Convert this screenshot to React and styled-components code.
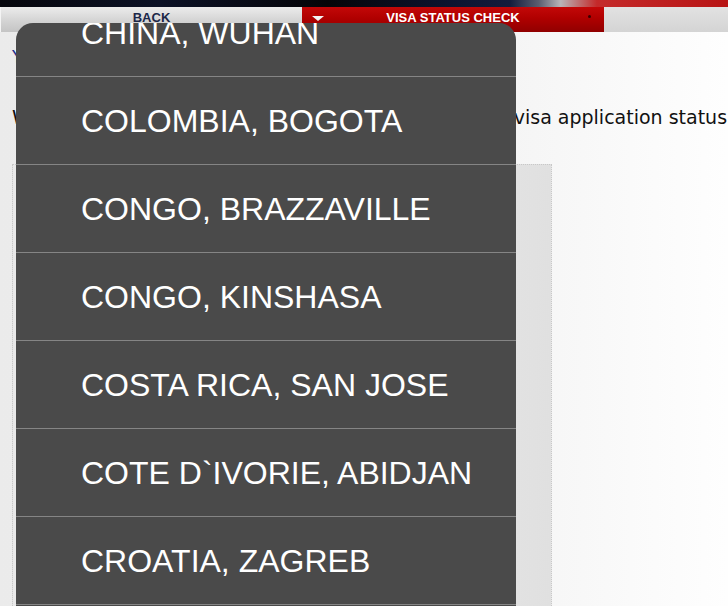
import React from "react";
import styled, { createGlobalStyle } from "styled-components";

const GlobalStyle = createGlobalStyle`
  html, body { margin: 0; padding: 0; }
  body { overflow: hidden; background: #f4f4f4; }
`;

const Page = styled.div`
  position: relative;
  width: 728px;
  height: 606px;
  overflow: hidden;
  background: linear-gradient(to right, #ebebeb 0%, #f2f2f2 60%, #fefefe 100%);
  font-family: "DejaVu Sans", Verdana, sans-serif;
`;

const Banner = styled.div`
  height: 7px;
  background: linear-gradient(
    to right,
    #07070d 0%,
    #0c1226 22%,
    #050508 45%,
    #0c1430 62%,
    #141c3c 70%,
    #5a5e70 74%,
    #b8b4b8 77%,
    #c42a2a 82%,
    #b81414 100%
  );
`;

const TabBar = styled.div`
  display: flex;
  height: 25px;
  font-family: "Liberation Sans", Arial, sans-serif;
  font-weight: bold;
  font-size: 13px;
  line-height: 15px;
`;

const Tab = styled.div`
  position: relative;
  width: ${(p) => p.$w}px;
  display: flex;
  justify-content: center;
  padding-top: 3px;
  box-sizing: border-box;
  color: ${(p) => (p.$red ? "#ffffff" : "#1b2748")};
  background: ${(p) =>
    p.$red
      ? "linear-gradient(to bottom, #c30808 0%, #b00000 45%, #900000 100%)"
      : "linear-gradient(to bottom, #ececec 0%, #d6d6d6 50%, #c4c4c4 100%)"};
  border-left: ${(p) => (p.$red ? "none" : "1px solid #f4f4f4")};
`;

const Filler = styled.div`
  flex: 1;
  background: linear-gradient(to bottom, #e2e2e2, #d4d4d4);
`;

const Caret = styled.span`
  position: absolute;
  left: 10px;
  top: 9px;
  width: 0;
  height: 0;
  border-left: 6px solid transparent;
  border-right: 6px solid transparent;
  border-top: 5px solid #f4f4f4;
`;

const Dot = styled.span`
  position: absolute;
  right: 13px;
  top: 8px;
  width: 3px;
  height: 3px;
  border-radius: 50%;
  background: #3a0000;
`;

const Content = styled.div`
  display: flex;
  flex-direction: column;
  padding: 15px 0 0 12px;
`;

const TopLink = styled.a`
  font-size: 17px;
  line-height: 20px;
  height: 20px;
  color: #1f2f8a;
  text-decoration: none;
`;

const Intro = styled.p`
  margin: 39px 0 0;
  font-size: 19px;
  line-height: 22px;
  color: #111;
  white-space: nowrap;
`;

const FormBox = styled.div`
  margin-top: 36px;
  width: 540px;
  height: 460px;
  box-sizing: border-box;
  border: 1px dotted #c8c8c8;
  background: linear-gradient(to right, #e9e9e9 0%, #e6e6e6 80%, #e0e0e0 100%);
`;

const Menu = styled.div`
  position: absolute;
  left: 16px;
  top: 23px;
  width: 500px;
  bottom: 0;
  background: #4a4a4a;
  border-radius: 17px 17px 0 0;
  overflow: hidden;
`;

const List = styled.ul`
  list-style: none;
  margin: -34px 0 0;
  padding: 0;
`;

const Item = styled.li`
  height: 88px;
  box-sizing: border-box;
  border-bottom: 1px solid #858585;
  display: flex;
  align-items: center;
  padding: 1px 0 0 65px;
  color: #ffffff;
  font-family: "Liberation Sans", Arial, sans-serif;
  font-size: 32px;
  white-space: nowrap;
`;

const cities = [
  "CHINA, WUHAN",
  "COLOMBIA, BOGOTA",
  "CONGO, BRAZZAVILLE",
  "CONGO, KINSHASA",
  "COSTA RICA, SAN JOSE",
  "COTE D`IVORIE, ABIDJAN",
  "CROATIA, ZAGREB",
  "CUBA, HAVANA",
];

export default function App() {
  return (
    <Page>
      <GlobalStyle />
      <Banner />
      <TabBar>
        <Tab $w={302}>BACK</Tab>
        <Tab $w={302} $red>
          <Caret />
          VISA STATUS CHECK
          <Dot />
        </Tab>
        <Filler />
      </TabBar>
      <Content>
        <TopLink href="#">Your visa status</TopLink>
        <Intro>Welcome to the site, where you can check your U.S. visa application status check.</Intro>
        <FormBox />
      </Content>
      <Menu>
        <List>
          {cities.map((c) => (
            <Item key={c}>{c}</Item>
          ))}
        </List>
      </Menu>
    </Page>
  );
}
